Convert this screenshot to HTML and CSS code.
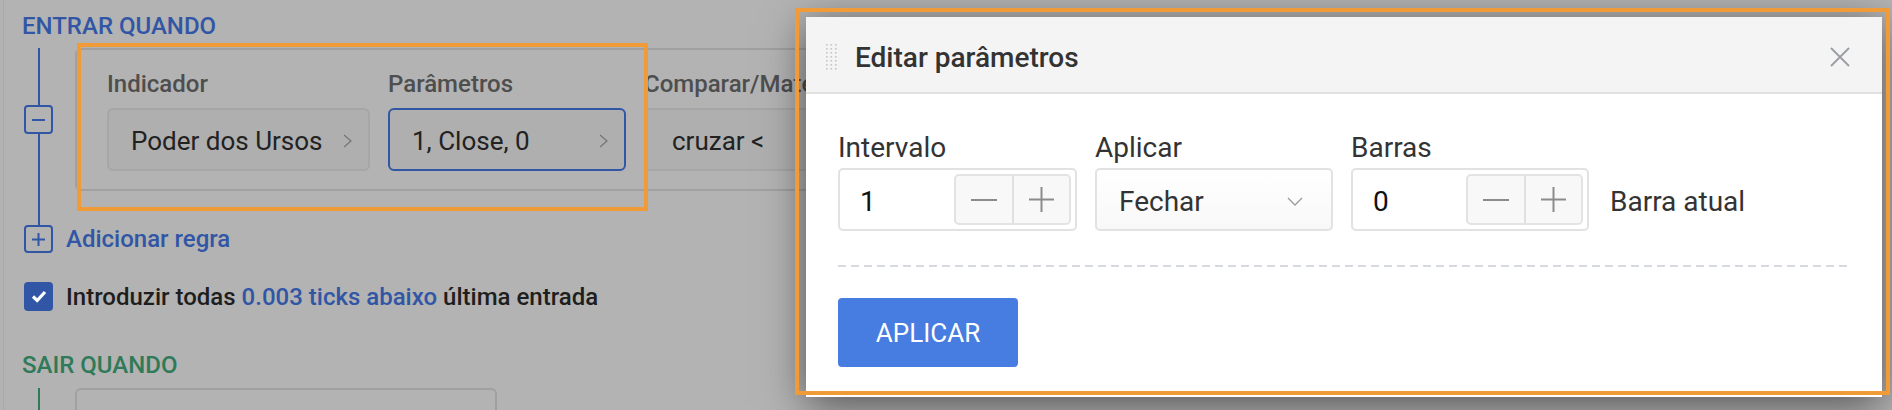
FILE: index.html
```html
<!DOCTYPE html>
<html lang="pt">
<head>
<meta charset="utf-8">
<title>Editar parâmetros</title>
<link rel="stylesheet" href="styles.css">
</head>
<body>
<div class="page">
  <div class="section-title entry">ENTRAR QUANDO</div>
  <div class="tree blue">
    <div class="tree-row">
      <span class="toggle"><svg width="13" height="2" viewBox="0 0 13 2"><rect width="13" height="2" fill="#3156a5"/></svg></span>
      <div class="card">
        <div class="field f-ind">
          <div class="flabel">Indicador</div>
          <div class="fbox"><span>Poder dos Ursos</span><svg width="9" height="14" viewBox="0 0 9 14"><path d="M1 1 L8 7 L1 13" stroke="#767676" stroke-width="1.3" fill="none"/></svg></div>
        </div>
        <div class="field f-par">
          <div class="flabel">Parâmetros</div>
          <div class="fbox active"><span>1, Close, 0</span><svg width="9" height="14" viewBox="0 0 9 14"><path d="M1 1 L8 7 L1 13" stroke="#767676" stroke-width="1.3" fill="none"/></svg></div>
        </div>
        <div class="field f-cmp">
          <div class="flabel">Comparar/Matemática</div>
          <div class="fbox cmp"><span>cruzar &lt;</span></div>
        </div>
      </div>
    </div>
  </div>
  <div class="add-row">
    <span class="toggle add"><svg width="13" height="13" viewBox="0 0 13 13"><rect x="5.5" width="2" height="13" fill="#3156a5"/><rect y="5.5" width="13" height="2" fill="#3156a5"/></svg></span>
    <span>Adicionar regra</span>
  </div>
  <div class="check-row">
    <span class="checkbox"><svg width="16" height="13" viewBox="0 0 16 13"><path d="M2 6.5 L6.2 10.5 L14 2" stroke="#fff" stroke-width="3.2" fill="none"/></svg></span>
    <span>Introduzir todas <span class="link">0.003 ticks abaixo</span> última entrada</span>
  </div>
  <div class="section-title exit">SAIR QUANDO</div>
  <div class="tree green">
    <div class="card empty"></div>
  </div>
</div>

<div class="hl hl-rule"></div>

<div class="modal">
  <div class="modal-header">
    <svg class="handle" width="11" height="26" viewBox="0 0 11 26">
      <g fill="#c6c6c6">
        <rect x="0" y="0" width="1.6" height="1.6"/><rect x="4.5" y="0" width="1.6" height="1.6"/><rect x="9" y="0" width="1.6" height="1.6"/>
        <rect x="0" y="4" width="1.6" height="1.6"/><rect x="4.5" y="4" width="1.6" height="1.6"/><rect x="9" y="4" width="1.6" height="1.6"/>
        <rect x="0" y="8" width="1.6" height="1.6"/><rect x="4.5" y="8" width="1.6" height="1.6"/><rect x="9" y="8" width="1.6" height="1.6"/>
        <rect x="0" y="12" width="1.6" height="1.6"/><rect x="4.5" y="12" width="1.6" height="1.6"/><rect x="9" y="12" width="1.6" height="1.6"/>
        <rect x="0" y="16" width="1.6" height="1.6"/><rect x="4.5" y="16" width="1.6" height="1.6"/><rect x="9" y="16" width="1.6" height="1.6"/>
        <rect x="0" y="20" width="1.6" height="1.6"/><rect x="4.5" y="20" width="1.6" height="1.6"/><rect x="9" y="20" width="1.6" height="1.6"/>
        <rect x="0" y="24" width="1.6" height="1.6"/><rect x="4.5" y="24" width="1.6" height="1.6"/><rect x="9" y="24" width="1.6" height="1.6"/>
      </g>
    </svg>
    <span class="modal-title">Editar parâmetros</span>
    <svg class="close" width="20" height="20" viewBox="0 0 20 20"><path d="M1 1 L19 19 M19 1 L1 19" stroke="#9ca0a5" stroke-width="2" fill="none"/></svg>
  </div>
  <div class="modal-body">
    <div class="param-row">
      <div class="pfield">
        <div class="plabel">Intervalo</div>
        <div class="num-input">
          <span class="val">1</span>
          <span class="stepper">
            <span class="step"><svg width="26" height="2" viewBox="0 0 26 2"><rect width="26" height="2" fill="#8c8c8c"/></svg></span>
            <span class="step"><svg width="25" height="25" viewBox="0 0 25 25"><rect x="11.5" width="2" height="25" fill="#8c8c8c"/><rect y="11.5" width="25" height="2" fill="#8c8c8c"/></svg></span>
          </span>
        </div>
      </div>
      <div class="pfield">
        <div class="plabel">Aplicar</div>
        <div class="select"><span>Fechar</span><svg width="16" height="9" viewBox="0 0 16 9"><path d="M1 1 L8 8 L15 1" stroke="#9a9a9a" stroke-width="1.3" fill="none"/></svg></div>
      </div>
      <div class="pfield">
        <div class="plabel">Barras</div>
        <div class="num-input">
          <span class="val">0</span>
          <span class="stepper">
            <span class="step"><svg width="26" height="2" viewBox="0 0 26 2"><rect width="26" height="2" fill="#8c8c8c"/></svg></span>
            <span class="step"><svg width="25" height="25" viewBox="0 0 25 25"><rect x="11.5" width="2" height="25" fill="#8c8c8c"/><rect y="11.5" width="25" height="2" fill="#8c8c8c"/></svg></span>
          </span>
        </div>
      </div>
      <div class="suffix">Barra atual</div>
    </div>
    <div class="divider"></div>
    <button class="apply">APLICAR</button>
  </div>
</div>

<div class="hl hl-modal"></div>
</body>
</html>
```

FILE: styles.css
```css
* { box-sizing: border-box; }

body {
  margin: 0;
  width: 1892px;
  height: 410px;
  overflow: hidden;
  position: relative;
  background: #b3b3b3;
  font-family: Roboto, "Noto Sans", "Liberation Sans", sans-serif;
}

.page {
  margin-left: 3px;
  border-left: 1px solid #a9a9a9;
  padding: 13px 0 0 18px;
  height: 410px;
}

.section-title {
  font-size: 24px;
  font-weight: 500;
  line-height: 27px;
  white-space: nowrap;
}
.entry { color: #3156a5; margin-bottom: 8px; }
.exit { color: #2f7a58; margin-top: 41px; margin-bottom: 9px; }

.tree {
  margin-left: 16px;
  border-left: 2px solid #3156a5;
  padding-bottom: 34px;
}
.tree.green {
  border-left-color: #2f7a58;
  padding-bottom: 0;
  padding-left: 35px;
}

.tree-row {
  display: flex;
  align-items: center;
}

.toggle {
  flex: none;
  width: 29px;
  height: 29px;
  border: 2px solid #3156a5;
  border-radius: 4px;
  background: #b3b3b3;
  margin-left: -16px;
  display: flex;
  align-items: center;
  justify-content: center;
}
.toggle.add { margin-left: 0; height: 28px; }

.card {
  flex: none;
  margin-left: 22px;
  width: 1000px;
  border: 2px solid #a0a0a0;
  border-radius: 6px;
  padding: 20px 0 18px 30px;
  display: flex;
  gap: 18px;
}
.card.empty {
  margin-left: 0;
  width: 422px;
  height: 22px;
  padding: 0;
  border-bottom: none;
  border-radius: 6px 6px 0 0;
}

.flabel {
  font-size: 24px;
  font-weight: 500;
  line-height: 28px;
  color: #4e4e4e;
  margin-bottom: 10px;
  white-space: nowrap;
}

.f-ind { width: 263px; }
.f-par { width: 238px; }
.f-cmp { width: 238px; }

.fbox {
  height: 63px;
  border: 2px solid #a6a6a6;
  border-radius: 6px;
  background: #afafaf;
  display: flex;
  align-items: center;
  justify-content: space-between;
  padding: 2px 16px 0 22px;
  font-size: 26px;
  color: #222;
  white-space: nowrap;
}
.fbox.active { border-color: #3156a5; }
.fbox.cmp { padding-left: 26px; }

.add-row {
  display: flex;
  align-items: center;
  gap: 13px;
  margin-left: 2px;
  color: #3156a5;
  font-size: 24px;
  font-weight: 500;
  line-height: 28px;
}

.check-row {
  display: flex;
  align-items: center;
  gap: 13px;
  margin-top: 29px;
  margin-left: 2px;
  font-size: 24px;
  font-weight: 500;
  color: #1e1e1e;
  white-space: nowrap;
}
.checkbox {
  flex: none;
  width: 29px;
  height: 29px;
  border-radius: 4px;
  background: #3156a5;
  display: flex;
  align-items: center;
  justify-content: center;
}
.link { color: #3156a5; }

.hl {
  position: absolute;
  border: 4px solid #f19a38;
  pointer-events: none;
}
.hl-rule { left: 77px; top: 43px; width: 571px; height: 168px; }
.hl-modal { left: 795px; top: 8px; width: 1095px; height: 387px; }

.modal {
  position: absolute;
  left: 806px;
  top: 17px;
  width: 1076px;
  height: 380px;
  background: #fff;
  box-shadow: 0 8px 40px rgba(0, 0, 0, 0.55);
}

.modal-header {
  height: 77px;
  background: #f4f4f4;
  border-bottom: 2px solid #e1e1e1;
  display: flex;
  align-items: center;
  padding: 5px 32px 0 20px;
}
.handle { flex: none; }
.modal-title {
  margin-left: 18px;
  font-size: 28px;
  font-weight: 500;
  color: #333;
  flex: 1;
}
.close { flex: none; }

.modal-body {
  padding: 37px 32px 30px 32px;
}

.param-row {
  display: flex;
  align-items: flex-end;
  gap: 18px;
}

.plabel {
  font-size: 28px;
  line-height: 33px;
  color: #333;
  margin-bottom: 4px;
}

.num-input {
  width: 239px;
  height: 63px;
  border: 2px solid #e2e2e2;
  border-radius: 5px;
  display: flex;
  align-items: center;
  justify-content: space-between;
  padding: 0 4px 0 20px;
  font-size: 28px;
  color: #111;
}
.val { padding-top: 4px; }
.pfield:nth-child(3) .num-input { width: 238px; }

.stepper {
  width: 117px;
  height: 51px;
  border: 2px solid #e3e3e3;
  border-radius: 5px;
  background: #f8f8f8;
  display: flex;
}
.step {
  flex: 1;
  display: flex;
  align-items: center;
  justify-content: center;
}
.step + .step { border-left: 2px solid #e0e0e0; }

.select {
  width: 238px;
  height: 63px;
  border: 2px solid #e2e2e2;
  border-radius: 5px;
  background: linear-gradient(#ffffff, #f8f8f8);
  display: flex;
  align-items: center;
  justify-content: space-between;
  padding: 3px 28px 0 22px;
  font-size: 28px;
  color: #333;
}

.suffix {
  height: 63px;
  display: flex;
  align-items: center;
  padding-top: 3px;
  margin-left: 3px;
  font-size: 28px;
  color: #333;
}

.divider {
  margin-top: 34px;
  height: 2px;
  background: repeating-linear-gradient(90deg, #d6d9de 0 8px, transparent 8px 13px);
}

.apply {
  display: block;
  margin-top: 31px;
  width: 180px;
  height: 69px;
  border: none;
  border-radius: 4px;
  background: #477ce0;
  color: #fff;
  font-family: Roboto, "Noto Sans", sans-serif;
  font-size: 26px;
  padding: 0;
}
```
